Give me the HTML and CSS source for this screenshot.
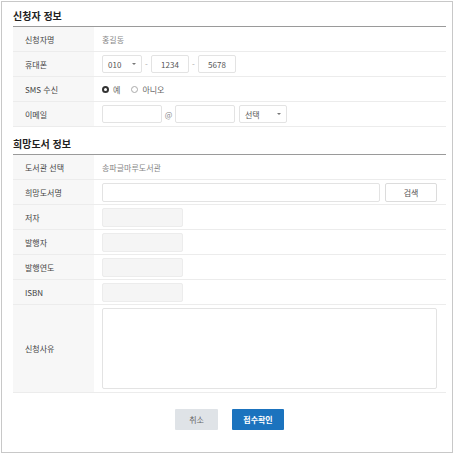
FILE: index.html
```html
<!DOCTYPE html>
<html lang="ko">
<head>
<meta charset="utf-8">
<title>희망도서 신청</title>
<link rel="stylesheet" href="styles.css">
</head>
<body>
<div class="frame">
  <h2 class="sec-title first">신청자 정보</h2>
  <div class="table">
    <div class="row">
      <div class="th">신청자명</div>
      <div class="td"><span class="val">홍길동</span></div>
    </div>
    <div class="row">
      <div class="th">휴대폰</div>
      <div class="td">
        <div class="box sel w-phone"><span class="sel-text">010</span><span class="arrow"></span></div>
        <span class="dash">-</span>
        <div class="box center w-num">1234</div>
        <span class="dash">-</span>
        <div class="box center w-num">5678</div>
      </div>
    </div>
    <div class="row">
      <div class="th">SMS 수신</div>
      <div class="td">
        <span class="radio on"></span><span class="rlabel">예</span>
        <span class="radio off"></span><span class="rlabel">아니오</span>
      </div>
    </div>
    <div class="row">
      <div class="th">이메일</div>
      <div class="td">
        <div class="box w-mail"></div>
        <span class="at">@</span>
        <div class="box w-mail"></div>
        <div class="box sel w-domain"><span class="sel-text">선택</span><span class="arrow"></span></div>
      </div>
    </div>
  </div>

  <h2 class="sec-title second">희망도서 정보</h2>
  <div class="table">
    <div class="row">
      <div class="th">도서관 선택</div>
      <div class="td"><span class="val">송파글마루도서관</span></div>
    </div>
    <div class="row">
      <div class="th">희망도서명</div>
      <div class="td">
        <div class="box tall w-title"></div>
        <div class="btn-search">검색</div>
      </div>
    </div>
    <div class="row">
      <div class="th">저자</div>
      <div class="td"><div class="box tall disabled w-dis"></div></div>
    </div>
    <div class="row">
      <div class="th">발행자</div>
      <div class="td"><div class="box tall disabled w-dis"></div></div>
    </div>
    <div class="row">
      <div class="th">발행연도</div>
      <div class="td"><div class="box tall disabled w-dis"></div></div>
    </div>
    <div class="row">
      <div class="th">ISBN</div>
      <div class="td"><div class="box tall disabled w-dis"></div></div>
    </div>
    <div class="row big">
      <div class="th">신청사유</div>
      <div class="td"><div class="box textarea"></div></div>
    </div>
  </div>

  <div class="actions">
    <div class="btn cancel">취소</div>
    <div class="btn submit">접수확인</div>
  </div>
</div>
</body>
</html>
```

FILE: styles.css
```css
* { box-sizing: border-box; }
html, body { margin: 0; padding: 0; background: #fff; }
body {
  font-family: "Noto Sans CJK KR", "Noto Sans", sans-serif;
  font-size: 8px;
  color: #444;
}
.frame {
  margin: 1px 0 0 1px;
  width: 452px;
  height: 452px;
  border: 1px solid #c8c8c8;
  padding: 0 6px 0 11px;
}
.sec-title {
  margin: 0;
  font-size: 10px;
  font-weight: bold;
  color: #222;
  line-height: 20px;
  padding-top: 4px;
  padding-bottom: 0;
}
.sec-title.second { margin-top: 3px; }
.table {
  border-top: 1px solid #9a9a9a;
}
.row {
  display: flex;
  height: 25px;
  border-bottom: 1px solid #ececec;
}
.row.big { height: 88px; }
.th {
  width: 81px;
  flex: none;
  background: #f7f7f7;
  padding-left: 12px;
  display: flex;
  align-items: center;
  color: #444;
}
.td {
  flex: 1;
  display: flex;
  align-items: center;
  padding-left: 8px;
  color: #666;
}
.val { color: #888; }
.box {
  height: 18px;
  border: 1px solid #e3e3e3;
  border-radius: 2px;
  background: #fff;
  display: flex;
  align-items: center;
  color: #555;
  flex: none;
}
.box.tall { height: 19px; }
.box.center { justify-content: center; }
.box.disabled { background: #f5f5f5; border-color: #ececec; }
.w-phone { width: 40px; }
.w-num { width: 38px; }
.w-mail { width: 60px; }
.w-domain { width: 48px; margin-left: 4px; }
.w-title { width: 278px; }
.w-dis { width: 81px; }
.sel { padding-left: 5px; position: relative; }
.sel-text { flex: 1; }
.arrow {
  width: 0; height: 0;
  border-left: 2px solid transparent;
  border-right: 2px solid transparent;
  border-top: 2px solid #777;
  margin-right: 5px;
}
.dash {
  width: 9px;
  text-align: center;
  color: #aaa;
}
.at {
  width: 13px;
  text-align: center;
  color: #888;
}
.radio {
  width: 7px;
  height: 7px;
  border-radius: 50%;
  display: inline-block;
  flex: none;
}
.radio.on { border: 2px solid #333; background: #fff; }
.radio.off { border: 1px solid #aaa; background: #fff; margin-left: 11px; }
.rlabel { margin-left: 4px; color: #666; }
.btn-search {
  width: 52px;
  height: 19px;
  margin-left: 5px;
  border: 1px solid #dcdcdc;
  border-radius: 2px;
  background: #fff;
  display: flex;
  align-items: center;
  justify-content: center;
  color: #555;
}
.textarea { width: 335px; height: 81px; }
.actions {
  display: flex;
  justify-content: center;
  gap: 14px;
  margin-top: 16px;
}
.btn {
  height: 21px;
  display: flex;
  align-items: center;
  justify-content: center;
  border-radius: 1px;
}
.btn.cancel { width: 43px; background: #dfe3e7; color: #666; }
.btn.submit { width: 52px; background: #1b73be; color: #fff; font-weight: bold; }
```
